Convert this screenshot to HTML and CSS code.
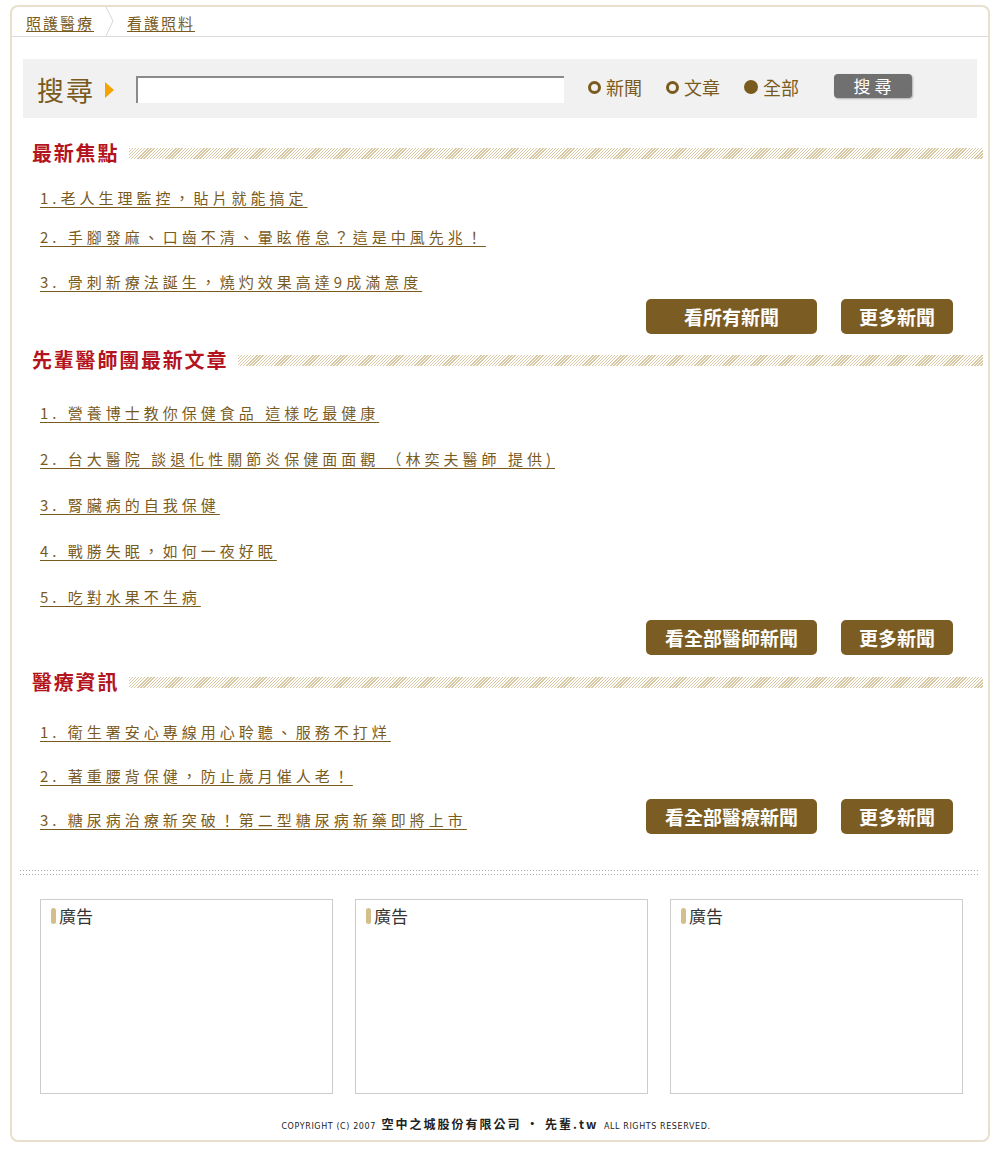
FILE: index.html
```
<!DOCTYPE html>
<html lang="zh-Hant">
<head>
<meta charset="utf-8">
<title>看護照料</title>
<link rel="stylesheet" href="styles.css">
</head>
<body>
<div class="page">
  <nav class="crumbs">
    <a class="crumb" href="#">照護醫療</a>
    <svg class="crumb-sep" width="14" height="30" viewBox="0 0 14 30"><polyline points="2,0 9,14 2,29" fill="none" stroke="#d6d6d6" stroke-width="1"/></svg>
    <a class="crumb" href="#">看護照料</a>
  </nav>

  <form class="search">
    <span class="search-label">搜尋</span>
    <span class="search-tri"></span>
    <input class="search-input" type="text">
    <span class="opt"><span class="radio"></span>新聞</span>
    <span class="opt"><span class="radio"></span>文章</span>
    <span class="opt"><span class="radio radio-on"></span>全部</span>
    <span class="search-btn">搜尋</span>
  </form>

  <section class="sec sec-1">
    <h2 class="sec-head"><span class="sec-title">最新焦點</span><span class="hatch"></span></h2>
    <ol class="links">
      <li><a href="#">1.老人生理監控，貼片就能搞定</a></li>
      <li><a href="#">2. 手腳發麻、口齒不清、暈眩倦怠？這是中風先兆！</a></li>
      <li><a href="#">3. 骨刺新療法誕生，燒灼效果高達9成滿意度</a></li>
    </ol>
    <div class="btns">
      <a class="btn btn-wide" href="#">看所有新聞</a>
      <a class="btn" href="#">更多新聞</a>
    </div>
  </section>

  <section class="sec sec-2">
    <h2 class="sec-head"><span class="sec-title">先輩醫師團最新文章</span><span class="hatch"></span></h2>
    <ol class="links">
      <li><a href="#">1. 營養博士教你保健食品 這樣吃最健康</a></li>
      <li><a href="#">2. 台大醫院 談退化性關節炎保健面面觀 （林奕夫醫師 提供)</a></li>
      <li><a href="#">3. 腎臟病的自我保健</a></li>
      <li><a href="#">4. 戰勝失眠，如何一夜好眠</a></li>
      <li><a href="#">5. 吃對水果不生病</a></li>
    </ol>
    <div class="btns">
      <a class="btn btn-wide" href="#">看全部醫師新聞</a>
      <a class="btn" href="#">更多新聞</a>
    </div>
  </section>

  <section class="sec sec-3">
    <h2 class="sec-head"><span class="sec-title">醫療資訊</span><span class="hatch"></span></h2>
    <div class="row-end">
      <ol class="links">
        <li><a href="#">1. 衛生署安心專線用心聆聽、服務不打烊</a></li>
        <li><a href="#">2. 著重腰背保健，防止歲月催人老！</a></li>
        <li><a href="#">3. 糖尿病治療新突破！第二型糖尿病新藥即將上市</a></li>
      </ol>
      <div class="btns">
        <a class="btn btn-wide" href="#">看全部醫療新聞</a>
        <a class="btn" href="#">更多新聞</a>
      </div>
    </div>
  </section>

  <div class="dots"></div>

  <div class="ads">
    <div class="ad"><div class="ad-title"><span class="ad-bar"></span>廣告</div></div>
    <div class="ad"><div class="ad-title"><span class="ad-bar"></span>廣告</div></div>
    <div class="ad"><div class="ad-title"><span class="ad-bar"></span>廣告</div></div>
  </div>

  <footer class="foot">
    <span class="foot-en">COPYRIGHT (C) 2007</span>
    <span class="foot-zh">空中之城股份有限公司 • 先輩.tw</span>
    <span class="foot-en">ALL RIGHTS RESERVED.</span>
  </footer>
</div>
</body>
</html>
```

FILE: styles.css
```
* { box-sizing: border-box; }
html, body { margin: 0; padding: 0; background: #fff; }
body { font-family: "Noto Sans CJK TC", "Noto Sans", sans-serif; color: #333; }

.page {
  margin: 5px 0 0 10px;
  width: 980px;
  border: 2px solid #e8e0cc;
  border-radius: 8px;
  padding-bottom: 5px;
}

/* breadcrumb */
.crumbs {
  height: 30px;
  padding: 3px 0 0 14px;
  border-bottom: 1px solid #dcdcdc;
  display: flex;
  align-items: center;
}
.crumb {
  font-size: 15px;
  line-height: 18px;
  letter-spacing: 2px;
  color: #7a5b1e;
  text-decoration: underline;
  text-underline-offset: 2px;
}
.crumb-sep { margin: -3px 9px 0 10px; align-self: flex-start; }

/* search */
.search {
  margin: 22px 11px 0 11px;
  height: 59px;
  background: #f1f1f1;
  display: flex;
  align-items: center;
  padding-left: 14px;
}
.search-label {
  font-size: 27px;
  line-height: 30px;
  color: #7a5b1e;
  letter-spacing: 2px;
  margin-top: 3px;
}
.search-tri {
  width: 0; height: 0;
  border-left: 9px solid #f5a300;
  border-top: 8px solid transparent;
  border-bottom: 8px solid transparent;
  margin-left: 10px;
  margin-top: 2px;
}
.search-input {
  margin-left: 22px;
  width: 428px;
  height: 27px;
  border: none;
  border-top: 2px solid #8a8a8a;
  border-left: 2px solid #8a8a8a;
  background: #fff;
  padding: 0;
  margin-top: 1px;
}
.opt {
  display: flex;
  align-items: center;
  font-size: 18px;
  line-height: 20px;
  color: #7a5b1e;
  margin-left: 24px;
  margin-top: -3px;
}
.opt:first-of-type { margin-left: 25px; }
.radio {
  width: 13px; height: 13px;
  border: 3px solid #7a5b1e;
  border-radius: 50%;
  margin-right: 5px;
}
.radio-on { background: #7a5b1e; width: 14px; height: 14px; }
.search-btn {
  margin-left: 35px;
  margin-top: -6px;
  width: 78px;
  height: 24px;
  border-radius: 4px;
  background: #707070;
  box-shadow: 1px 1px 2px #b0b0b0;
  color: #fff;
  font-size: 17px;
  line-height: 24px;
  letter-spacing: 4px;
  text-align: center;
  padding-left: 3px;
}

/* sections */
.sec { padding: 0 5px 0 20px; }
.sec-head {
  margin: 0;
  height: 21px;
  display: flex;
  align-items: center;
}
.sec-title {
  font-size: 20px;
  line-height: 21px;
  font-weight: 700;
  color: #b3141d;
  letter-spacing: 1.8px;
  white-space: nowrap;
}
.hatch {
  flex: 1;
  height: 11px;
  margin-left: 10px;
  margin-top: 1px;
  background: repeating-linear-gradient(135deg, #d8c8a2 0 1px, transparent 1px 2.2px);
}
.sec-1 { margin-top: 24px; }
.sec-2 { margin-top: 15px; }
.sec-3 { margin-top: 16px; }

.links {
  list-style: none;
  margin: 0;
  padding: 0 0 0 8px;
}
.links li { line-height: 20px; height: 20px; }
.links a {
  font-size: 15px;
  letter-spacing: 4px;
  color: #7a5b1e;
  text-decoration: underline;
  text-underline-offset: 3px;
  white-space: nowrap;
}
.sec-1 .links { margin-top: 24px; }
.sec-1 .links li + li { margin-top: 19px; }
.sec-1 .links li:nth-child(3) { margin-top: 25px; }
.sec-1 .btns { margin-top: 8px; }

.sec-2 .links { margin-top: 32px; }
.sec-2 .links li + li { margin-top: 26px; }
.sec-2 .btns { margin-top: 14px; }

.row-end {
  display: flex;
  justify-content: space-between;
  align-items: flex-end;
  margin-top: 29px;
}
.sec-3 .links li + li { margin-top: 24px; }
.sec-3 .btns { margin-bottom: -5px; }

.btns {
  display: flex;
  justify-content: flex-end;
  gap: 24px;
  padding-right: 30px;
}
.btn {
  display: block;
  width: 112px;
  height: 35px;
  border-radius: 5px;
  background: #7b5c23;
  color: #fff;
  font-size: 19px;
  font-weight: 700;
  line-height: 35px;
  text-align: center;
  text-decoration: none;
}
.btn-wide { width: 171px; }

/* divider */
.dots {
  margin: 41px 8px 0 8px;
  height: 5px;
  background:
    linear-gradient(90deg, #a8a8a8 1px, transparent 1px) 0 0 / 3px 1px repeat-x,
    linear-gradient(90deg, #a8a8a8 1px, transparent 1px) 0 4px / 3px 1px repeat-x;
}

/* ads */
.ads {
  margin-top: 24px;
  padding-left: 28px;
  display: flex;
  gap: 22px;
}
.ad {
  width: 293px;
  height: 195px;
  border: 1px solid #cccccc;
  padding: 7px 0 0 10px;
}
.ad-title {
  display: flex;
  align-items: center;
  font-size: 17px;
  line-height: 18px;
  color: #333;
}
.ad-bar {
  width: 5px;
  height: 16px;
  border-radius: 3px;
  background: #d4bf8c;
  margin-right: 3px;
}

/* footer */
.foot {
  margin-top: 20px;
  text-align: center;
  line-height: 16px;
  color: #222;
  padding-right: 8px;
}
.foot-en {
  font-family: "DejaVu Sans", sans-serif;
  font-size: 8px;
  letter-spacing: 0.6px;
}
.foot-zh {
  font-size: 12px;
  font-weight: 700;
  letter-spacing: 2px;
  margin: 0 2px;
}
```
